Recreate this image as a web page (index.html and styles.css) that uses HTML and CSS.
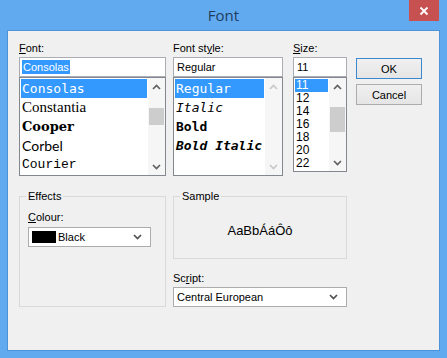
FILE: index.html
```html
<!DOCTYPE html>
<html>

<head>
    <meta name="viewport" content="width=device-width, initial-scale=1">
    <link rel="stylesheet" href="styles.css">
</head>

<body>
    <div class="window">
        <!-- Barra de título -->
        <div class="titlebar">
            <span class="title">Font</span>
            <button class="close">
                <svg width="10" height="10" viewBox="0 0 10 10">
                    <path d="M1.5 1.5 L8.5 8.5 M8.5 1.5 L1.5 8.5" stroke="#fff" stroke-width="1.8" fill="none"/>
                </svg>
            </button>
        </div>

        <div class="client">
            <div class="top-row">
                <!-- Fuente -->
                <div class="col col-font">
                    <div class="label"><u>F</u>ont:</div>
                    <div class="edit"><span class="sel">Consolas</span></div>
                    <div class="list list-font">
                        <div class="items">
                            <div class="item selected f-consolas">Consolas</div>
                            <div class="item f-constantia">Constantia</div>
                            <div class="item f-cooper">Cooper</div>
                            <div class="item f-corbel">Corbel</div>
                            <div class="item f-courier">Courier</div>
                        </div>
                        <div class="scrollbar">
                            <div class="arrow">
                                <svg width="9" height="6" viewBox="0 0 9 6"><polyline points="1,5 4.5,1.5 8,5" fill="none" stroke="#606060" stroke-width="1.7"/></svg>
                            </div>
                            <div class="track"><div class="thumb thumb-font"></div></div>
                            <div class="arrow">
                                <svg width="9" height="6" viewBox="0 0 9 6"><polyline points="1,1 4.5,4.5 8,1" fill="none" stroke="#606060" stroke-width="1.7"/></svg>
                            </div>
                        </div>
                    </div>
                </div>

                <!-- Estilo -->
                <div class="col col-style">
                    <div class="label">Font st<u>y</u>le:</div>
                    <div class="edit">Regular</div>
                    <div class="list list-style">
                        <div class="items mono">
                            <div class="item selected">Regular</div>
                            <div class="item italic">Italic</div>
                            <div class="item bold">Bold</div>
                            <div class="item bold italic">Bold Italic</div>
                        </div>
                        <div class="scrollbar">
                            <div class="arrow">
                                <svg width="9" height="6" viewBox="0 0 9 6"><polyline points="1,5 4.5,1.5 8,5" fill="none" stroke="#c8c8c8" stroke-width="1.7"/></svg>
                            </div>
                            <div class="track"></div>
                            <div class="arrow">
                                <svg width="9" height="6" viewBox="0 0 9 6"><polyline points="1,1 4.5,4.5 8,1" fill="none" stroke="#c8c8c8" stroke-width="1.7"/></svg>
                            </div>
                        </div>
                    </div>
                </div>

                <!-- Tamaño -->
                <div class="col col-size">
                    <div class="label"><u>S</u>ize:</div>
                    <div class="edit">11</div>
                    <div class="list list-size">
                        <div class="items">
                            <div class="item selected">11</div>
                            <div class="item">12</div>
                            <div class="item">14</div>
                            <div class="item">16</div>
                            <div class="item">18</div>
                            <div class="item">20</div>
                            <div class="item">22</div>
                        </div>
                        <div class="scrollbar">
                            <div class="arrow">
                                <svg width="9" height="6" viewBox="0 0 9 6"><polyline points="1,5 4.5,1.5 8,5" fill="none" stroke="#606060" stroke-width="1.7"/></svg>
                            </div>
                            <div class="track"><div class="thumb thumb-size"></div></div>
                            <div class="arrow">
                                <svg width="9" height="6" viewBox="0 0 9 6"><polyline points="1,1 4.5,4.5 8,1" fill="none" stroke="#606060" stroke-width="1.7"/></svg>
                            </div>
                        </div>
                    </div>
                </div>

                <!-- Botones -->
                <div class="buttons">
                    <button class="button default">OK</button>
                    <button class="button">Cancel</button>
                </div>
            </div>

            <div class="bottom-row">
                <div class="group effects">
                    <span class="legend">Effects</span>
                    <div class="label"><u>C</u>olour:</div>
                    <div class="combo combo-colour">
                        <span class="swatch"></span>
                        <span class="combo-text">Black</span>
                        <svg class="chevron" width="9" height="6" viewBox="0 0 9 6"><polyline points="1,1 4.5,4.5 8,1" fill="none" stroke="#505050" stroke-width="1.7"/></svg>
                    </div>
                </div>

                <div class="col-sample">
                    <div class="group sample">
                        <span class="legend">Sample</span>
                        <div class="sample-text">AaBbÁáÔô</div>
                    </div>
                    <div class="label script-label">Sc<u>r</u>ipt:</div>
                    <div class="combo combo-script">
                        <span class="combo-text">Central European</span>
                        <svg class="chevron" width="9" height="6" viewBox="0 0 9 6"><polyline points="1,1 4.5,4.5 8,1" fill="none" stroke="#505050" stroke-width="1.7"/></svg>
                    </div>
                </div>
            </div>
        </div>
    </div>
</body>

</html>
```

FILE: styles.css
```css
/* Diálogo de fuente estilo Windows 8 */
body {
    margin: 0;
    font-family: "Liberation Sans", Arial, sans-serif;
    font-size: 11px;
    color: #000;
}

.window {
    width: 447px;
    height: 358px;
    box-sizing: border-box;
    background-color: #62aaf0;
    padding: 0 7px 7px 7px;
    position: relative;
}

.titlebar {
    height: 30px;
    display: flex;
    align-items: center;
    justify-content: center;
}

.title {
    font-family: "Open Sans", sans-serif;
    font-size: 15px;
    color: #1e3d5f;
    margin-top: -1px;
}

.close {
    position: absolute;
    top: 0;
    left: 409px;
    width: 30px;
    height: 21px;
    border: none;
    padding: 0;
    background-color: #c75050;
    display: flex;
    align-items: center;
    justify-content: center;
}

.client {
    height: 321px;
    box-sizing: border-box;
    border: 1px solid #4d93d9;
    background-color: #f0f0f0;
    padding: 9px 0 0 11px;
}

.top-row {
    display: flex;
    align-items: flex-start;
}

.label {
    height: 16px;
    line-height: 16px;
    margin-bottom: 1px;
}

.col-font {
    width: 147px;
    margin-right: 7px;
}

.col-style {
    width: 110px;
    margin-right: 10px;
}

.col-size {
    width: 54px;
    margin-right: 9px;
}

.edit {
    height: 20px;
    box-sizing: border-box;
    border: 1px solid #abadb3;
    background-color: #fff;
    line-height: 18px;
    padding-left: 3px;
}

.edit .sel {
    background-color: #3399ff;
    color: #fff;
    margin-left: -1px;
    padding: 1px 1px;
}

.list {
    box-sizing: border-box;
    border: 1px solid #828790;
    background-color: #fff;
    display: flex;
    height: 99px;
}

.list-size {
    height: 95px;
}

.items {
    flex: 1;
    padding: 1px;
    overflow: hidden;
}

.item {
    height: 19px;
    line-height: 19px;
    padding-left: 1px;
    white-space: nowrap;
}

.item.selected {
    background-color: #3399ff;
    color: #fff;
}

.f-consolas, .mono {
    font-family: "DejaVu Sans Mono", monospace;
    font-size: 13px;
}

.f-constantia {
    font-family: "Liberation Serif", serif;
    font-size: 15px;
}

.f-cooper {
    font-family: "DejaVu Serif", serif;
    font-size: 13px;
    font-weight: bold;
}

.f-corbel {
    font-family: "Lato", sans-serif;
    font-size: 14px;
}

.f-courier {
    font-family: "Liberation Mono", monospace;
    font-size: 13px;
}

.italic {
    font-style: italic;
}

.bold {
    font-weight: bold;
}

.list-size .item {
    height: 13px;
    line-height: 13px;
    font-size: 12px;
}

.scrollbar {
    width: 17px;
    display: flex;
    flex-direction: column;
    background-color: #f6f6f6;
}

.arrow {
    height: 17px;
    display: flex;
    align-items: center;
    justify-content: center;
}

.track {
    flex: 1;
}

.thumb {
    margin: 0 1px;
    background-color: #cdcdcd;
}

.thumb-font {
    margin-top: 13px;
    height: 17px;
}

.thumb-size {
    margin-top: 12px;
    height: 25px;
}

.buttons {
    width: 66px;
    padding-top: 18px;
    display: flex;
    flex-direction: column;
}

.button {
    height: 21px;
    margin-bottom: 5px;
    border: 1px solid #acacac;
    background: linear-gradient(#f0f0f0, #e5e5e5);
    font-family: "Liberation Sans", Arial, sans-serif;
    font-size: 11px;
    color: #000;
    padding: 0;
}

.button.default {
    border-color: #3c88d0;
}

.bottom-row {
    display: flex;
    margin-top: 20px;
}

.group {
    position: relative;
    box-sizing: border-box;
    border: 1px solid #d9d9d9;
}

.legend {
    position: absolute;
    top: -9px;
    left: 6px;
    padding: 0 2px;
    line-height: 16px;
    background-color: #f0f0f0;
}

.effects {
    width: 147px;
    height: 111px;
    margin-right: 7px;
    padding: 12px 0 0 8px;
}

.effects .label {
    margin-bottom: 2px;
}

.combo {
    height: 20px;
    box-sizing: border-box;
    border: 1px solid #acacac;
    background-color: #fff;
    display: flex;
    align-items: center;
    padding: 0 8px 0 3px;
}

.combo-colour {
    width: 123px;
}

.swatch {
    width: 24px;
    height: 12px;
    background-color: #000;
    margin-right: 2px;
}

.combo-text {
    flex: 1;
}

.col-sample {
    width: 174px;
}

.sample {
    height: 63px;
    display: flex;
    align-items: center;
    justify-content: center;
}

.sample-text {
    font-size: 13px;
    margin-top: 6px;
}

.script-label {
    margin-top: 11px;
}
```
